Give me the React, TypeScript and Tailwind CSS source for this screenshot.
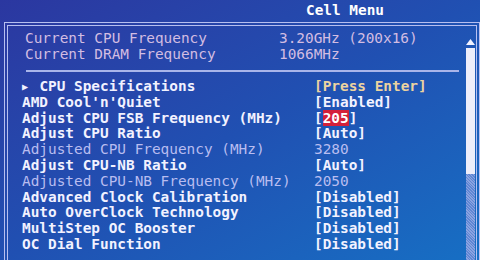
const info = [
  { label: 'Current CPU Frequency', value: '3.20GHz (200x16)' },
  { label: 'Current DRAM Frequency', value: '1066MHz' },
]

type Item = {
  label: string
  value: string
  kind?: 'sub' | 'dim' | 'edit'
}

const items: Item[] = [
  { label: 'CPU Specifications', value: '[Press Enter]', kind: 'sub' },
  { label: "AMD Cool'n'Quiet", value: '[Enabled]' },
  { label: 'Adjust CPU FSB Frequency (MHz)', value: '205', kind: 'edit' },
  { label: 'Adjust CPU Ratio', value: '[Auto]' },
  { label: 'Adjusted CPU Frequency (MHz)', value: '3280', kind: 'dim' },
  { label: 'Adjust CPU-NB Ratio', value: '[Auto]' },
  { label: 'Adjusted CPU-NB Frequency (MHz)', value: '2050', kind: 'dim' },
  { label: 'Advanced Clock Calibration', value: '[Disabled]' },
  { label: 'Auto OverClock Technology', value: '[Disabled]' },
  { label: 'MultiStep OC Booster', value: '[Disabled]' },
  { label: 'OC Dial Function', value: '[Disabled]' },
]

function ItemRow({ item }: { item: Item }) {
  const dim = item.kind === 'dim'
  return (
    <div
      className={`flex h-[15.8px] items-center whitespace-pre ${
        dim ? 'font-normal text-[#b9bdf0]' : 'font-bold text-[#f2f2ff]'
      }`}
    >
      <span className="w-[292px]">
        {item.kind === 'sub' ? (
          <>
            <span className="inline-block w-[17.4px] text-[10px] align-[1px]">▶</span>
            {item.label}
          </>
        ) : (
          item.label
        )}
      </span>
      {item.kind === 'sub' && <span className="text-[#ecd3a0]">{item.value}</span>}
      {item.kind === 'edit' && (
        <span>
          [<span className="bg-[#d4203a] text-white">{item.value}</span>]
        </span>
      )}
      {(item.kind === undefined || item.kind === 'dim') && <span>{item.value}</span>}
    </div>
  )
}

export default function App() {
  return (
    <div
      className="flex h-[260px] w-[480px] flex-col overflow-hidden bg-gradient-to-br from-[#2b37a0] via-[#2050b2] to-[#166fc4] text-[14.4px]"
      style={{ fontFamily: '"DejaVu Sans Mono", "Liberation Mono", monospace' }}
    >
      <div className="flex h-[22px] shrink-0 items-center pl-[306px] font-bold text-white">
        Cell Menu
      </div>

      <div className="ml-[4px] flex flex-1 border-4 border-b-0 border-double border-[#b7bff0]">
        <div className="flex flex-1 flex-col pl-[17px] pt-[5px] pr-[6px]">
          {info.map((row) => (
            <div key={row.label} className="flex h-[16px] items-center whitespace-pre text-[#d3bde2]">
              <span className="w-[254px]">{row.label}</span>
              <span>{row.value}</span>
            </div>
          ))}
          <div className="mt-[7px] ml-[1px] h-[2px] bg-[#a9b5ea]" />
          <div className="mt-[7px] -ml-[3px] flex flex-col">
            {items.map((item) => (
              <ItemRow key={item.label} item={item} />
            ))}
          </div>
          <div className="mt-[9px] -ml-[4px] h-[2px] w-[60px] bg-[#c8d2f4]" />
        </div>

        <div className="mr-[1px] flex w-[10px] flex-col items-center pt-[13px]">
          <svg width="9" height="6" viewBox="0 0 9 6" className="mb-[3px]">
            <polygon points="4.5,0 9,6 0,6" fill="#f2f2ff" />
          </svg>
          <div className="h-[126px] w-[9px] bg-[#eeeefa]" />
          <div className="w-[9px] flex-1 bg-[repeating-linear-gradient(45deg,#8aa3e0_0px,#8aa3e0_1px,#5f86d4_1px,#5f86d4_2px)]" />
        </div>
      </div>
    </div>
  )
}
